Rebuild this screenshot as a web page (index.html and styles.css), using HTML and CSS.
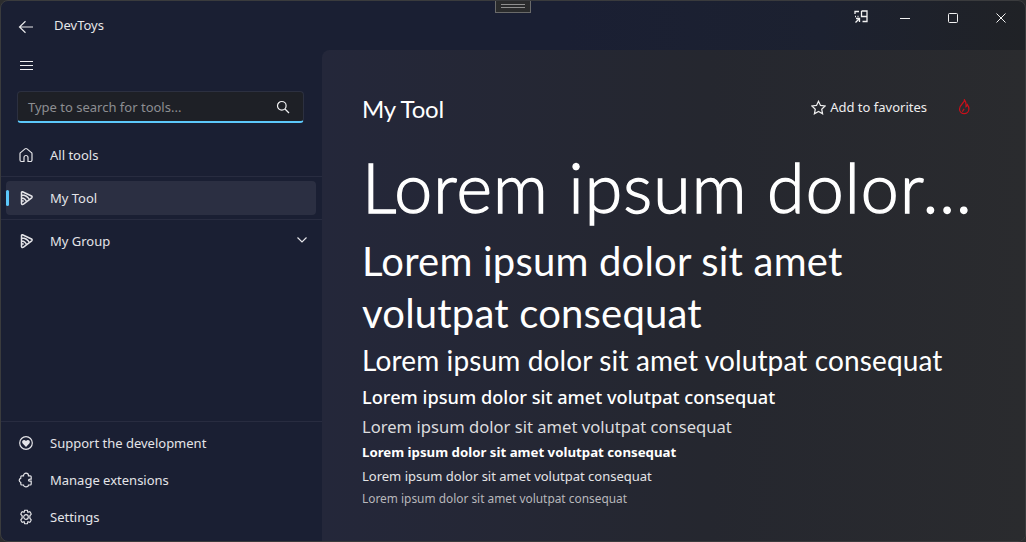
FILE: index.html
```html
<!DOCTYPE html>
<html lang="en">
<head>
    <meta charset="UTF-8">
    <title>DevToys</title>
    <link rel="stylesheet" href="styles.css">
</head>
<body>

<div class="window">
    <div class="grip"><span></span></div>

    <header class="titlebar">
        <svg class="back-icon" width="16" height="16" viewBox="0 0 16 16"><path d="M15 8H1.500M7.500 2.200L1.500 8l6 5.800"/></svg>
        <span class="app-name">DevToys</span>
        <div class="win-controls">
            <button class="win-btn win-popout">
                <svg width="14" height="14" viewBox="0 0 14 14"><path d="M1 4V1.500h4M7.500 1H13v10.500H8.500M7.500 1v5.500H13M1 6.500h1M3.500 6.500h1M1.500 12.500L5.500 8.500M2 8.500h3.500V12"/></svg>
            </button>
            <button class="win-btn">
                <svg width="10" height="10" viewBox="0 0 10 10"><path d="M0 5.500h10"/></svg>
            </button>
            <button class="win-btn">
                <svg width="10" height="10" viewBox="0 0 10 10"><rect x=".5" y=".5" width="9" height="9" rx="1"/></svg>
            </button>
            <button class="win-btn">
                <svg width="10" height="10" viewBox="0 0 10 10"><path d="M.5.500l9 9M9.500.500l-9 9"/></svg>
            </button>
        </div>
    </header>

    <div class="main">
        <nav class="sidebar">
            <button class="menu-btn">
                <svg width="14" height="12" viewBox="0 0 14 12"><path d="M0 1.500h13M0 5.500h13M0 9.500h13"/></svg>
            </button>

            <div class="search">
                <span class="search-hint">Type to search for tools...</span>
                <svg width="14" height="14" viewBox="0 0 14 14"><circle cx="5.800" cy="5.800" r="4.300"/><path d="M9 9l4 4"/></svg>
            </div>

            <a class="nav-item nav-home">
                <svg width="16" height="16" viewBox="0 0 16 16"><path d="M2 13V6.800a1.500 1.500 0 0 1 .6-1.200L7 1.900a1.600 1.600 0 0 1 2 0l4.400 3.700a1.500 1.500 0 0 1 .6 1.200V13a1.500 1.500 0 0 1-1.500 1.500H10V10.500a2 2 0 0 0-4 0v4H3.500A1.500 1.500 0 0 1 2 13z"/></svg>
                <span>All tools</span>
            </a>
            <div class="nav-sep"></div>
            <a class="nav-item active">
                <svg class="tool-icon" width="16" height="16" viewBox="0 0 16 16"><path d="M3.500 2.500c0-.6.500-1 1-.8l9 4.300c.8.400.8 1.300.2 1.800L5.500 14.200c-1 .7-2 .3-2-.8zM3.500 5c3.500 0 6.500 1.700 8 5M3.500 8c2.200 0 4.200 1 5.200 4.200M3.500 11h2.200"/></svg>
                <span>My Tool</span>
            </a>
            <div class="nav-sep"></div>
            <a class="nav-item">
                <svg class="tool-icon" width="16" height="16" viewBox="0 0 16 16"><path d="M3.500 2.500c0-.6.500-1 1-.8l9 4.300c.8.400.8 1.300.2 1.800L5.500 14.200c-1 .7-2 .3-2-.8zM3.500 5c3.500 0 6.500 1.700 8 5M3.500 8c2.200 0 4.200 1 5.200 4.200M3.500 11h2.200"/></svg>
                <span>My Group</span>
                <svg class="chevron" width="10" height="6" viewBox="0 0 10 6"><path d="M.5.500L5 5 9.500.500"/></svg>
            </a>

            <div class="nav-bottom">
                <a class="nav-item">
                    <svg width="16" height="16" viewBox="0 0 16 16"><circle cx="8" cy="8" r="6.300"/><path class="solid" d="M8 12L4.500 8.200C3 6 6 3.800 8 6c2-2.200 5 0 3.500 2.200z"/></svg>
                    <span>Support the development</span>
                </a>
                <a class="nav-item">
                    <svg width="16" height="16" viewBox="0 0 16 16"><path d="M5.500 3.800C5.500 2 6.800 1.200 8 1.200s2.500.8 2.500 2.600h1.700c.6 0 1 .4 1 1v2.400h-1c-1 0-1.700.4-1.700 1s.7 1 1.700 1h1v2.800c0 .6-.4 1-1 1h-1.700c0 1.200-1.300 1.800-2.500 1.800s-2.500-.6-2.500-1.800H3.800c-.6 0-1-.4-1-1V10.500C1.800 10 1.200 9.200 1.200 8.300s.6-1.700 1.600-2.200V4.800c0-.6.400-1 1-1z"/></svg>
                    <span>Manage extensions</span>
                </a>
                <a class="nav-item">
                    <svg width="16" height="16" viewBox="0 0 16 16"><circle cx="8" cy="8" r="2.300"/><path d="M6.600 1.400a6.800 6.800 0 0 1 2.800 0l.5 1.900 1.900-.6a6.800 6.800 0 0 1 1.400 2.400L11.800 7a5 5 0 0 1 0 2l1.400 1.900a6.800 6.800 0 0 1-1.400 2.400l-1.900-.6-.5 1.900a6.800 6.800 0 0 1-2.800 0l-.5-1.900-1.900.6a6.800 6.800 0 0 1-1.400-2.400L4.200 9a5 5 0 0 1 0-2L2.800 5.100a6.800 6.800 0 0 1 1.400-2.400l1.900.6z"/></svg>
                    <span>Settings</span>
                </a>
            </div>
        </nav>

        <main class="content">
            <div class="tool-head">
                <h1 class="tool-title">My Tool</h1>
                <a class="fav">
                    <svg width="15" height="15" viewBox="0 0 15 15"><path d="M7.500 1.200l2 4.200 4.600.6-3.400 3.200.9 4.600-4.100-2.300-4.100 2.300.9-4.600L.9 6l4.600-.6z"/></svg>
                    <span>Add to favorites</span>
                </a>
                <svg class="flame" width="14" height="16" viewBox="0 0 14 16"><path d="M7.500.800c.4 2.700-5 5-5 9.200a4.700 4.700 0 0 0 9.400 0c0-1.700-.7-3.200-1.500-4.300-.2 1-.8 1.600-1.400 1.900C9.300 5 8.800 2.400 7.500.800zM5.500 12.800c0-1.300 1-2 1.700-3"/></svg>
            </div>
            <div class="text-ramp">
                <div class="t-display">Lorem ipsum dolor…</div>
                <div class="t-title-lg">Lorem ipsum dolor sit amet volutpat consequat</div>
                <div class="t-title">Lorem ipsum dolor sit amet volutpat consequat</div>
                <div class="t-subtitle">Lorem ipsum dolor sit amet volutpat consequat</div>
                <div class="t-large">Lorem ipsum dolor sit amet volutpat consequat</div>
                <div class="t-strong">Lorem ipsum dolor sit amet volutpat consequat</div>
                <div class="t-body">Lorem ipsum dolor sit amet volutpat consequat</div>
                <div class="t-caption">Lorem ipsum dolor sit amet volutpat consequat</div>
            </div>
        </main>
    </div>
</div>

</body>
</html>
```

FILE: styles.css
```css
* {
    box-sizing: border-box;
}
body {
    margin: 0;
    width: 1026px;
    height: 542px;
    overflow: hidden;
    background: #2b2c2e;
    font-family: "Noto Sans", "Open Sans", sans-serif;
    color: #fff;
}
svg {
    fill: none;
    stroke: currentColor;
    stroke-width: 1.2;
    flex: none;
}
svg .solid {
    fill: currentColor;
    stroke: none;
}
.window {
    position: relative;
    display: flex;
    flex-direction: column;
    width: 1026px;
    height: 542px;
    border: 1px solid #3a3b3d;
    border-radius: 8px;
    overflow: hidden;
    background: linear-gradient(90deg, #1a1f33 0%, #1a1f33 55%, #1c2130 80%, #202226 100%);
}

/* little drag handle at the top of the window */
.grip {
    position: absolute;
    top: -1px;
    left: 494px;
    width: 36px;
    height: 13px;
    background: #2a2b2c;
    border: 1px solid #6a6a6a;
}
.grip span {
    display: block;
    margin: 3px auto 0;
    width: 24px;
    height: 4px;
    border-top: 1px solid #8f8f8f;
    border-bottom: 1px solid #8f8f8f;
}

.titlebar {
    display: flex;
    align-items: flex-start;
    height: 49px;
    flex: none;
}
.back-icon {
    margin: 18px 0 0 17px;
    color: #e8e8ea;
}
.app-name {
    margin: 14px 0 0 20px;
    font-size: 13px;
    line-height: 20px;
    color: #e6e6e8;
}
.win-controls {
    display: flex;
    margin-left: auto;
}
.win-btn {
    display: flex;
    align-items: center;
    justify-content: center;
    width: 48px;
    height: 34px;
    padding: 0;
    border: 0;
    background: none;
    color: #f2f2f2;
}
.win-btn svg {
    stroke-width: 1;
}
.win-popout {
    margin-right: -4px;
    padding-bottom: 3px;
}
.win-popout svg {
    stroke-width: 1.3;
}

.main {
    display: flex;
    flex: 1;
    min-height: 0;
}
.sidebar {
    display: flex;
    flex-direction: column;
    width: 321px;
    flex: none;
}
.menu-btn {
    display: flex;
    align-items: center;
    height: 16px;
    margin: 8px 0 0 19px;
    padding: 0;
    border: 0;
    background: none;
    color: #f0f0f2;
}
.search {
    display: flex;
    align-items: center;
    justify-content: space-between;
    margin: 17px 18px 0 16px;
    height: 32px;
    padding: 0 13px 0 10px;
    background: #1e2026;
    border: 1px solid #2c3040;
    border-bottom: 2px solid #5cc8fb;
    border-radius: 4px;
    color: #f0f0f2;
}
.search-hint {
    font-size: 13px;
    color: #8d8e92;
}
.nav-item {
    position: relative;
    display: flex;
    align-items: center;
    gap: 16px;
    height: 34px;
    margin: 0 5px;
    padding-left: 12px;
    border-radius: 4px;
    font-size: 13px;
    color: #e4e4e8;
}
.nav-home {
    margin-top: 15px;
}
.nav-sep {
    height: 1px;
    margin: 4px 0;
    background: #282c40;
}
.tool-icon {
    stroke-width: 1.5;
}
.active {
    background: #2b2f42;
    margin-right: 6px;
}
.active::before {
    content: "";
    position: absolute;
    left: 0;
    top: 9px;
    width: 3px;
    height: 16px;
    border-radius: 2px;
    background: #5cc8fb;
}
.chevron {
    margin-left: auto;
    margin-right: 10px;
    margin-top: -2px;
}
.nav-bottom {
    display: flex;
    flex-direction: column;
    gap: 3px;
    margin-top: auto;
    padding: 4px 0 7px;
    border-top: 1px solid #282c40;
}

.content {
    flex: 1;
    min-width: 0;
    padding: 40px 55px 0 40px;
    background: linear-gradient(90deg, #24273a 0%, #25272f 55%, #2a2b2e 100%);
    border-top-left-radius: 8px;
}
.tool-head {
    display: flex;
    align-items: center;
    height: 36px;
}
.tool-title {
    margin: 0;
    font-size: 24px;
    font-weight: 400;
    letter-spacing: -.2px;
    font-family: Lato, sans-serif;
}
.fav {
    display: flex;
    align-items: center;
    gap: 4px;
    margin-left: auto;
    margin-bottom: 2px;
    font-size: 13px;
    color: #eee;
}
.flame {
    margin: 0 -1px 2px 30px;
    color: #c8101a;
}
.text-ramp {
    margin-top: 19px;
}
.t-display {
    font-family: Lato, sans-serif;
    font-size: 68px;
    font-weight: 300;
    -webkit-text-stroke: 1.3px #fff;
    letter-spacing: 1.1px;
    line-height: 84px;
    white-space: nowrap;
}
.t-title-lg {
    font-family: Lato, sans-serif;
    font-size: 40px;
    letter-spacing: .2px;
    line-height: 52px;
    max-width: 500px;
    margin-top: 6px;
}
.t-title {
    font-family: Lato, sans-serif;
    font-size: 28px;
    letter-spacing: .13px;
    line-height: 38px;
    margin-top: 2px;
}
.t-subtitle {
    font-size: 18.2px;
    line-height: 34px;
    font-weight: 500;
    margin-top: 1px;
}
.t-large {
    font-size: 16.6px;
    line-height: 26px;
    color: #dcdcde;
}
.t-strong {
    font-size: 13.25px;
    line-height: 24px;
    font-weight: 700;
}
.t-body {
    font-size: 13px;
    line-height: 24px;
    color: #e4e4e6;
}
.t-caption {
    font-size: 11.9px;
    line-height: 20px;
    color: #b8b8bc;
}
```
